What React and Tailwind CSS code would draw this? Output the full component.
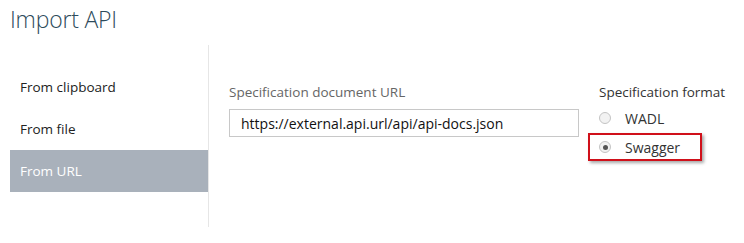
import React, { useState } from 'react';

const tabs = ['From clipboard', 'From file', 'From URL'];

function Radio({ checked, label, highlight }) {
  return (
    <div
      className={
        'flex items-center ' +
        (highlight
          ? 'mt-0 h-[28px] ml-[-11px] pl-[9px] w-[114px] border-2 border-[#d0101a] shadow-[2px_2px_3px_rgba(0,0,0,0.35)]'
          : 'mt-[1px] h-[30px]')
      }
    >
      <span className="w-[12px] h-[12px] rounded-full border border-[#c4c4c4] bg-[#f2f2f2] flex items-center justify-center">
        {checked && <span className="w-[5px] h-[5px] rounded-full bg-[#555]" />}
      </span>
      <span className="ml-[14px] text-[14px] text-[#333]">{label}</span>
    </div>
  );
}

export default function App() {
  const [active] = useState(2);

  return (
    <div className="w-[744px] h-[243px] bg-white font-['Open_Sans',sans-serif] overflow-hidden">
      {/* Title */}
      <h1 className="pl-[10px] pt-[1px] text-[23px] font-light text-[#2d4b5b] leading-[36px] tracking-[-0.2px]">
        Import API
      </h1>

      <div className="flex mt-[8px] ml-[10px]">
        {/* Left tab list */}
        <div className="w-[199px] h-[182px] border-r border-[#e6e6e6] pt-[21px]">
          {tabs.map((t, i) => (
            <div
              key={t}
              className={
                'h-[42px] flex items-center pl-[10px] text-[13.5px] ' +
                (i === active ? 'bg-[#a9b1bb] text-white' : 'text-[#222]')
              }
            >
              {t}
            </div>
          ))}
        </div>

        {/* URL field */}
        <div className="pl-[20px] pt-[37px] w-[390px]">
          <div className="text-[13.5px] text-[#666] leading-[20px]">Specification document URL</div>
          <div className="mt-[7px] w-[350px] h-[28px] border border-[#c8c8c8] flex items-center pl-[11px] text-[14px] text-[#111]">
            https://external.api.url/api/api-docs.json
          </div>
        </div>

        {/* Format */}
        <div className="pt-[37px]">
          <div className="text-[13.5px] text-[#333] leading-[20px]">Specification format</div>
          <Radio label="WADL" />
          <Radio label="Swagger" checked highlight />
        </div>
      </div>
    </div>
  );
}
